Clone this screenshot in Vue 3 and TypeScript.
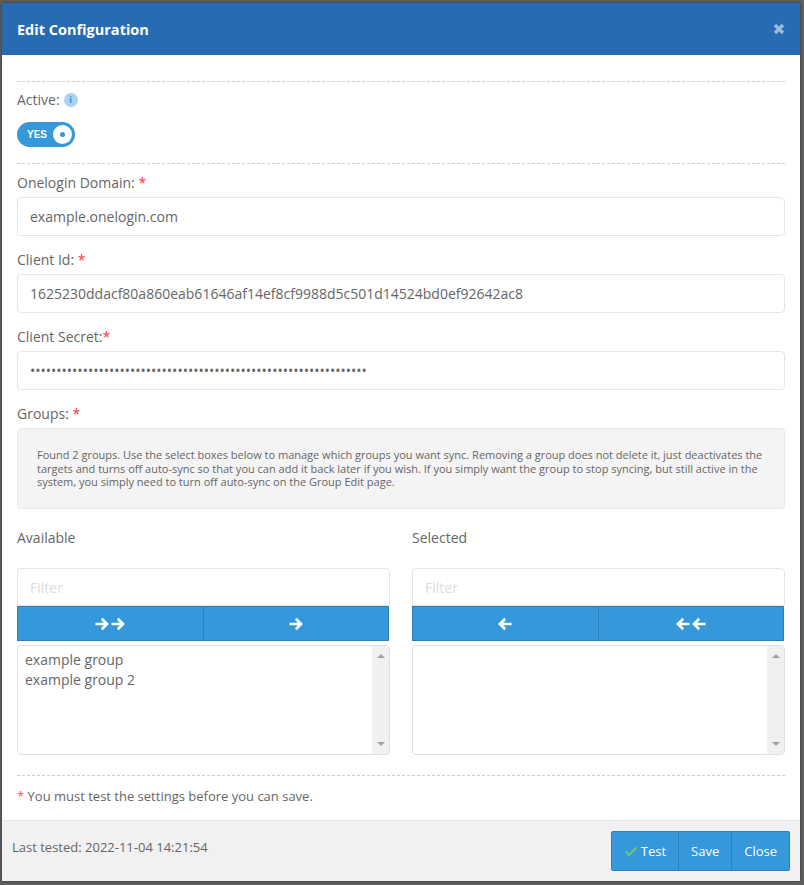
<script setup lang="ts">
const secret = "•".repeat(64);
const pickers = [
  { title: "Available", items: ["example group", "example group 2"], buttons: [2, 1], dir: "right" },
  { title: "Selected", items: [] as string[], buttons: [1, 2], dir: "left" },
];
</script>

<template>
  <div class="backdrop">
    <div class="modal">
      <header class="head">
        <h4>Edit Configuration</h4>
        <svg class="close" width="12" height="12" viewBox="0 0 12 12"><path d="M2 2l8 8M10 2l-8 8" stroke="#fff" stroke-width="3.2" fill="none" /></svg>
      </header>
      <main class="body">
        <div class="dash first"></div>
        <div class="label active-label">
          Active:
          <span class="info">i</span>
        </div>
        <div class="toggle"><span class="yes">YES</span><span class="knob"><i></i></span></div>
        <div class="dash second"></div>

        <div class="label">Onelogin Domain: <b>*</b></div>
        <input class="field" readonly value="example.onelogin.com" />
        <div class="label next">Client Id: <b>*</b></div>
        <input class="field" readonly value="1625230ddacf80a860eab61646af14ef8cf9988d5c501d14524bd0ef92642ac8" />
        <div class="label next">Client Secret:<b>*</b></div>
        <div class="field secret">{{ secret }}</div>
        <div class="label next">Groups: <b>*</b></div>
        <div class="well">
          Found 2 groups. Use the select boxes below to manage which groups you want sync. Removing a group does not delete it, just deactivates the targets and turns off auto-sync so that you can add it back later if you wish. If you simply want the group to stop syncing, but still active in the system, you simply need to turn off auto-sync on the Group Edit page.
        </div>

        <div class="pickers">
          <section v-for="p in pickers" :key="p.title" class="picker">
            <div class="picker-title">{{ p.title }}</div>
            <input class="filter" placeholder="Filter" />
            <div class="moves">
              <button v-for="(n, i) in p.buttons" :key="i" class="move">
                <svg v-for="k in n" :key="k" width="14" height="14" viewBox="0 0 14 14" :class="{ flip: p.dir === 'left' }">
                  <path d="M0.500 7h11.500M6.800 1.800L12 7l-5.200 5.200" fill="none" stroke="#fff" stroke-width="2.700" />
                </svg>
              </button>
            </div>
            <div class="listbox">
              <div class="options">
                <div v-for="item in p.items" :key="item">{{ item }}</div>
              </div>
              <div class="track">
                <span class="up"></span>
                <span class="down"></span>
              </div>
            </div>
          </section>
        </div>

        <div class="dash third"></div>
        <p class="note"><span>*</span> You must test the settings before you can save.</p>
      </main>
      <footer class="foot">
        <span class="tested">Last tested: 2022-11-04 14:21:54</span>
        <div class="actions">
          <button class="act test">
            <svg width="14" height="11" viewBox="0 0 14 11"><path d="M1.500 5.500l3.500 3.500 7.500-7.500" fill="none" stroke="#6cc57a" stroke-width="2.200" /></svg>
            Test
          </button>
          <button class="act save">Save</button>
          <button class="act shut">Close</button>
        </div>
      </footer>
    </div>
  </div>
</template>

<style scoped>
.backdrop {
  height: 885px;
  box-sizing: border-box;
  padding: 3px 4px 4px 2px;
  background: #606060;
  font-family: "Open Sans", sans-serif;
  color: #666;
  overflow: hidden;
}
.modal {
  height: 878px;
  display: flex;
  flex-direction: column;
  background: #fff;
  box-shadow: 0 0 3px #333;
}
.head {
  height: 52px;
  flex: none;
  display: flex;
  align-items: center;
  justify-content: space-between;
  padding: 0 15px;
  background: #276cb2;
}
.head h4 {
  margin: 0;
  font-size: 14.500px;
  font-weight: 700;
  color: #fff;
}
.close { opacity: 0.55; }
.body {
  flex: 1;
  padding: 26px 15px 0;
  font-size: 14px;
}
.dash {
  border-top: 1px dashed #ccc;
}
.label {
  height: 20px;
  line-height: 20px;
  margin-top: 4px;
  margin-bottom: 4px;
  color: #666;
}
.label b {
  color: #f33;
  font-weight: 400;
}
.next { margin-top: 14px; }
.active-label {
  display: flex;
  align-items: center;
  gap: 4px;
  margin-top: 8px;
  margin-bottom: 0;
}
.info {
  width: 14px;
  height: 14px;
  border-radius: 50%;
  background: #a9d3f3;
  color: #3498db;
  font: 700 9px/14px "DejaVu Sans", sans-serif;
  text-align: center;
}
.toggle {
  width: 58px;
  height: 25px;
  margin-top: 12px;
  border-radius: 13px;
  background: #3498db;
  display: flex;
  align-items: center;
  justify-content: space-between;
  padding: 0 3px 0 10px;
  box-sizing: border-box;
}
.yes {
  font: 700 10px "Liberation Sans", sans-serif;
  color: #fff;
}
.knob {
  width: 19px;
  height: 19px;
  border-radius: 50%;
  background: #fff;
  display: flex;
  align-items: center;
  justify-content: center;
}
.knob i {
  width: 5px;
  height: 5px;
  border-radius: 50%;
  background: #3498db;
}
.second { margin-top: 16px; margin-bottom: 9px; }
.field {
  display: block;
  width: 100%;
  height: 39px;
  box-sizing: border-box;
  padding: 0 12px;
  border: 1px solid #e5e5e5;
  border-radius: 4px;
  background: #fff;
  color: #666;
  font: 14px/37px "Open Sans", sans-serif;
  outline: none;
}
.secret {
  overflow: hidden;
  white-space: nowrap;
  letter-spacing: 0;
}
.well {
  height: 81px;
  box-sizing: border-box;
  padding: 19px 19px;
  border: 1px solid #e9e9e9;
  border-radius: 4px;
  background: #f4f4f4;
  font-size: 11px;
  line-height: 13.500px;
  color: #666;
}
.pickers {
  display: flex;
  gap: 22px;
  margin-top: 19px;
}
.picker { width: 373px; }
.picker-title {
  height: 20px;
  line-height: 20px;
  margin-bottom: 20px;
}
.filter {
  display: block;
  width: 100%;
  height: 38px;
  box-sizing: border-box;
  padding: 0 12px;
  border: 1px solid #e5e5e5;
  border-radius: 4px 4px 0 0;
  font: 14px "Open Sans", sans-serif;
  outline: none;
}
.filter::placeholder { color: #ddd; opacity: 1; }
.moves {
  display: flex;
  height: 35px;
  width: 372px;
}
.move {
  flex: 1;
  display: flex;
  align-items: center;
  justify-content: center;
  gap: 2px;
  padding: 0;
  background: #3498db;
  border: 1px solid #2a80b9;
  border-left: none;
}
.move:first-child { border-left: 1px solid #2a80b9; }
.flip { transform: scaleX(-1); }
.listbox {
  display: flex;
  height: 110px;
  margin-top: 4px;
  box-sizing: border-box;
  border: 1px solid #e0e0e0;
  border-radius: 4px;
  overflow: hidden;
}
.options {
  flex: 1;
  padding: 4px 7px;
  line-height: 20px;
  font-size: 14px;
}
.track {
  width: 17px;
  background: #f0f0f0;
  display: flex;
  flex-direction: column;
  justify-content: space-between;
  align-items: center;
  padding: 8px 0 8px;
  box-sizing: border-box;
}
.up, .down {
  width: 0;
  height: 0;
  border-left: 4px solid transparent;
  border-right: 4px solid transparent;
}
.up { border-bottom: 4px solid #a3a3a3; }
.down { border-top: 4px solid #a3a3a3; }
.third { margin-top: 20px; }
.note {
  margin: 10px 0 0;
  font-size: 13px;
  line-height: 20px;
}
.note span { color: #f55; }
.foot {
  height: 61px;
  flex: none;
  box-sizing: border-box;
  display: flex;
  justify-content: space-between;
  padding: 10px 10px 10px 10px;
  background: #f1f1f1;
  border-top: 1px solid #e6e6e6;
}
.tested {
  font-size: 13px;
  line-height: 32px;
  color: #666;
}
.actions {
  display: flex;
  height: 40px;
  border-radius: 3px;
  overflow: hidden;
}
.act {
  height: 40px;
  box-sizing: border-box;
  padding: 0 12px;
  background: #3498db;
  color: #fff;
  border: 1px solid #2a80b9;
  border-left: none;
  font: 13px "Open Sans", sans-serif;
  display: flex;
  align-items: center;
  gap: 3px;
}
.test { border-left: 1px solid #2a80b9; }
</style>
